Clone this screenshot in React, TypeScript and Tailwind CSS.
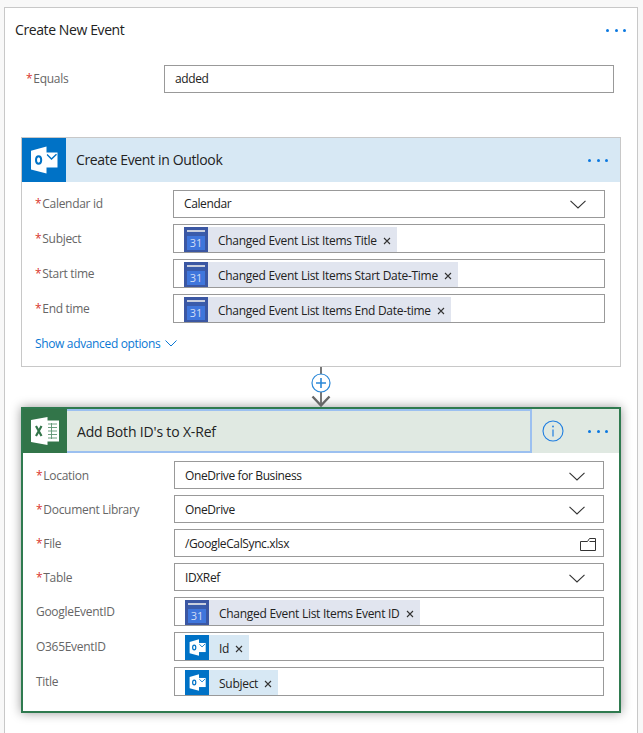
import type { ReactNode } from 'react';

const font = "font-['Open_Sans','Noto_Sans',sans-serif]";

function Dots({ className = '' }: { className?: string }) {
  return (
    <div className={`flex w-5 justify-between ${className}`}>
      <span className="h-[3px] w-[3px] rounded-full bg-[#0b78e0]" />
      <span className="h-[3px] w-[3px] rounded-full bg-[#0b78e0]" />
      <span className="h-[3px] w-[3px] rounded-full bg-[#0b78e0]" />
    </div>
  );
}

function Chevron() {
  return (
    <svg width="16" height="9" viewBox="0 0 16 9" fill="none" className="shrink-0">
      <path d="M0.5 0.8 L8 8 L15.5 0.8" stroke="#333" strokeWidth="1.1" />
    </svg>
  );
}

function FolderIcon() {
  return (
    <svg width="16" height="13" viewBox="0 0 16 13" fill="none" className="-mr-[11px] shrink-0">
      <path d="M0.5 3.5 H7.5 L9.5 0.5 H15.5 V12.5 H0.5 Z M9.5 3.5 H15.5" stroke="#333" strokeWidth="1" />
    </svg>
  );
}

function OutlookLogo({ size }: { size: number }) {
  return (
    <svg width={size} height={size} viewBox="0 0 28 28">
      <path d="M15 6.5 H27.5 V21.5 H15 Z" fill="#fff" />
      <path d="M17 8.6 L21.5 13 L26.5 8.2" fill="none" stroke="#0072c6" strokeWidth="1.4" />
      <path d="M1 4.8 L16.5 0.5 V27.5 L1 23.5 Z" fill="#fff" />
      <ellipse cx="8.6" cy="14" rx="2.6" ry="3.8" fill="none" stroke="#0072c6" strokeWidth="2" />
    </svg>
  );
}

function ExcelLogo() {
  return (
    <svg width="30" height="30" viewBox="0 0 30 30">
      <rect x="15" y="4.5" width="14" height="21" fill="#fff" />
      <path d="M18 8 H27 M18 11.5 H27 M18 15 H27 M18 18.5 H27 M18 22 H27" stroke="#5e9473" strokeWidth="0.9" />
      <path d="M21.5 7 V23" stroke="#5e9473" strokeWidth="0.9" />
      <path d="M1 4 L17.5 1 V29 L1 26 Z" fill="#fff" />
      <path d="M6 10 L11.5 20 M11.5 10 L6 20" stroke="#327549" strokeWidth="2.2" />
    </svg>
  );
}

function CalendarLogo() {
  return (
    <div className="flex h-full w-6 shrink-0 items-center justify-center bg-[#3b57a3]">
      <svg width="18" height="20" viewBox="0 0 18 20">
        <rect x="0" y="0" width="18" height="20" fill="#3f76dc" />
        <rect x="0" y="0" width="18" height="2" fill="#c9cfdd" />
        <rect x="0" y="2" width="18" height="4" fill="#3a5cab" />
        <text x="9" y="16.5" textAnchor="middle" fill="#d3def5" fontSize="11" fontFamily="Open Sans, sans-serif">31</text>
      </svg>
    </div>
  );
}

function Chip({ kind, text }: { kind: 'cal' | 'out'; text: string }) {
  const bg = kind === 'cal' ? 'bg-[#e1e5ef]' : 'bg-[#d7e8f4]';
  return (
    <div className={`flex h-[25px] items-center pr-[6px] ${bg}`}>
      {kind === 'cal' ? (
        <CalendarLogo />
      ) : (
        <div className="flex h-full w-6 shrink-0 items-center justify-center bg-[#0072c6]">
          <OutlookLogo size={17} />
        </div>
      )}
      <span className="ml-[10px] pt-[2px] text-[12px] leading-none tracking-[-0.28px] whitespace-nowrap text-[#222]">{text}</span>
      <svg width="8" height="8" viewBox="0 0 8 8" className="ml-[6px] mt-[3px] shrink-0">
        <path d="M1 1 L7 7 M7 1 L1 7" stroke="#333" strokeWidth="1.1" />
      </svg>
    </div>
  );
}

function Label({ text, required, low }: { text: string; required?: boolean; low?: boolean }) {
  return (
    <div className={`flex w-[138px] shrink-0 items-center text-[12px] tracking-[-0.3px] text-[#666] ${low ? 'pt-[2px]' : ''}`}>
      {required && <span className="mr-px text-[#d9342b]">*</span>}
      {text}
    </div>
  );
}

function Row({ label, required, children, chip, low }: { label: string; required?: boolean; children: ReactNode; chip?: boolean; low?: boolean }) {
  return (
    <div className="flex">
      <Label text={label} required={required} low={low} />
      <div
        className={`flex flex-1 border border-[#999] ${
          chip
            ? 'h-[29px] items-end pl-[10px]'
            : `h-[28px] items-center justify-between pl-[10px] pr-[18px] text-[12px] tracking-[-0.38px] text-[#222] ${low ? 'pt-[2px]' : ''}`
        }`}
      >
        {children}
      </div>
    </div>
  );
}

export default function App() {
  return (
    <div className={`h-[733px] overflow-hidden bg-[#f8f8f8] pl-1 pr-[5px] pt-[7px] ${font}`}>
      <div className="h-[760px] border border-[#c8c8c8] bg-white">
        <div className="flex h-[44px] items-center justify-between pb-[2px] pl-[10px] pr-[11px]">
          <span className="text-[14px] tracking-[-0.4px] text-[#222]">Create New Event</span>
          <Dots className="mt-[2px]" />
        </div>

        <div className="ml-[21px] mr-[23px] mt-[13px] flex">
          <Label text="Equals" required />
          <div className="flex h-[28px] flex-1 items-center border border-[#999] pl-[10px] text-[12px] tracking-[-0.38px] text-[#222]">
            added
          </div>
        </div>

        <section className="mx-4 mt-[44px] h-[230px] border border-[#c8c8c8]">
          <header className="flex h-[44px] items-center bg-[#d7e8f4] pr-[12px]">
            <div className="flex h-full w-[44px] items-center justify-center bg-[#0072c6]">
              <OutlookLogo size={28} />
            </div>
            <h2 className="ml-[10px] flex-1 pb-[2px] text-[14px] tracking-[-0.35px] text-[#222]">Create Event in Outlook</h2>
            <Dots />
          </header>
          <div className="flex flex-col gap-[6px] pl-[13px] pr-[15px] pt-[8px]">
            <Row label="Calendar id" required>
              Calendar
              <Chevron />
            </Row>
            <Row label="Subject" required chip>
              <Chip kind="cal" text="Changed Event List Items Title" />
            </Row>
            <Row label="Start time" required chip>
              <Chip kind="cal" text="Changed Event List Items Start Date-Time" />
            </Row>
            <Row label="End time" required chip>
              <Chip kind="cal" text="Changed Event List Items End Date-time" />
            </Row>
          </div>
          <div className="ml-[13px] mt-[12px] flex items-center text-[12px] tracking-[-0.35px] text-[#0b78d4]">
            Show advanced options
            <svg width="12" height="7" viewBox="0 0 12 7" fill="none" className="ml-[5px] mb-[2px]">
              <path d="M0.5 0.5 L6 6 L11.5 0.5" stroke="#0b78d4" strokeWidth="1" />
            </svg>
          </div>
        </section>

        <div className="relative mx-auto h-[40px] w-[24px]">
          <svg width="24" height="40" viewBox="0 0 24 40" fill="none">
            <path d="M12 0 V39" stroke="#555" strokeWidth="1.6" />
            <path d="M3.5 29.5 L12 38.5 L20.5 29.5" stroke="#666" strokeWidth="2.4" />
            <circle cx="12" cy="16" r="9" fill="#fff" stroke="#2b88d8" strokeWidth="1.2" />
            <path d="M12 11 V21 M7 16 H17" stroke="#2b88d8" strokeWidth="1.6" />
          </svg>
        </div>

        <section className="mx-4 h-[306px] border-2 border-[#2f7a4f] shadow-[0_0_10px_rgba(0,0,0,0.4)]">
          <header className="flex h-[44px] items-center bg-[#e0e9e2] pr-[11px]">
            <div className="flex h-full w-[509px] items-center border-2 border-l-0 border-[#9cc0f0]">
              <div className="flex h-[44px] w-[44px] items-center justify-center bg-[#327549]">
                <ExcelLogo />
              </div>
              <h2 className="ml-[10px] text-[14px] tracking-[-0.17px] text-[#222]">Add Both ID&apos;s to X-Ref</h2>
            </div>
            <svg width="22" height="22" viewBox="0 0 22 22" fill="none" className="ml-[10px]">
              <circle cx="11" cy="11" r="10" stroke="#1f7ee0" strokeWidth="1.1" />
              <path d="M11 9.5 V16.5" stroke="#1f7ee0" strokeWidth="1.2" />
              <circle cx="11" cy="6.5" r="0.9" fill="#1f7ee0" />
            </svg>
            <div className="flex-1" />
            <Dots />
          </header>
          <div className="flex flex-col gap-[6px] pl-[13px] pr-[15px] pt-[8px]">
            <Row label="Location" required low>
              OneDrive for Business
              <Chevron />
            </Row>
            <Row label="Document Library" required low>
              OneDrive
              <Chevron />
            </Row>
            <Row label="File" required low>
              /GoogleCalSync.xlsx
              <FolderIcon />
            </Row>
            <Row label="Table" required low>
              IDXRef
              <Chevron />
            </Row>
            <Row label="GoogleEventID" chip>
              <Chip kind="cal" text="Changed Event List Items Event ID" />
            </Row>
            <Row label="O365EventID" chip>
              <Chip kind="out" text="Id" />
            </Row>
            <Row label="Title" chip>
              <Chip kind="out" text="Subject" />
            </Row>
          </div>
        </section>
      </div>
    </div>
  );
}
